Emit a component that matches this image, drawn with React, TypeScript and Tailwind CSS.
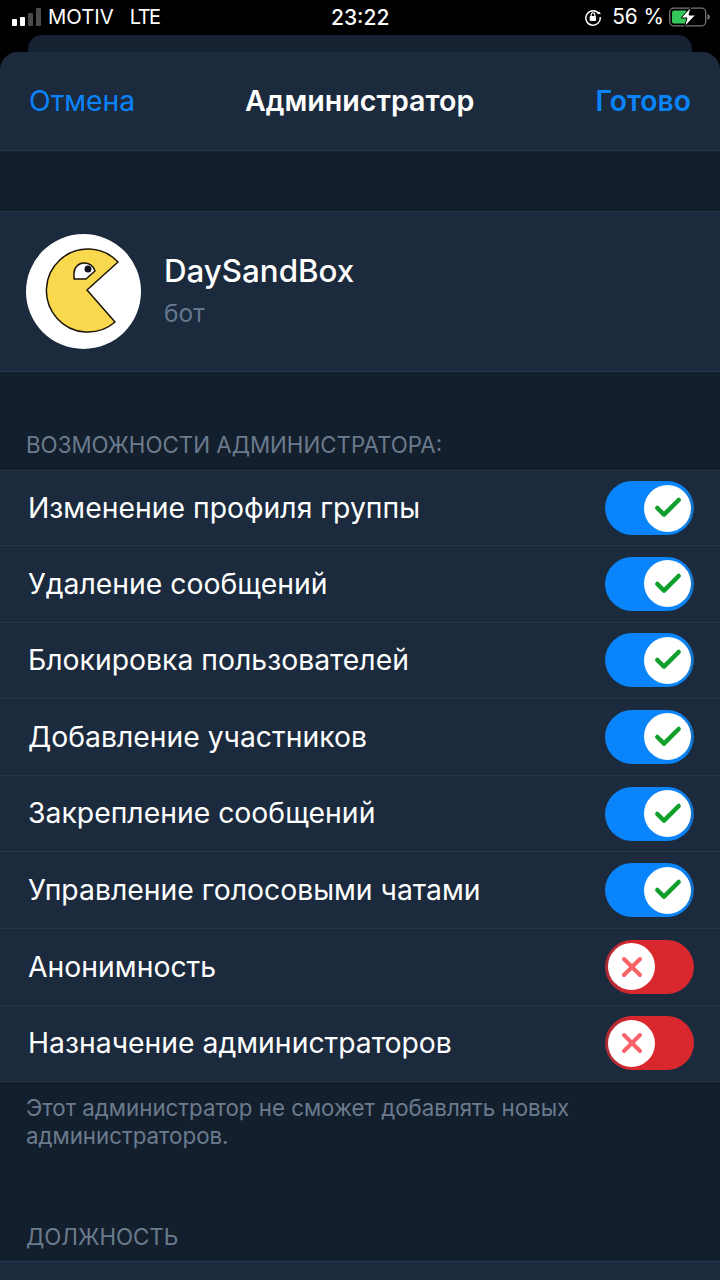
import { Check, X } from 'lucide-react';

const permissions = [
  { label: 'Изменение профиля группы', on: true },
  { label: 'Удаление сообщений', on: true },
  { label: 'Блокировка пользователей', on: true },
  { label: 'Добавление участников', on: true },
  { label: 'Закрепление сообщений', on: true },
  { label: 'Управление голосовыми чатами', on: true },
  { label: 'Анонимность', on: false },
  { label: 'Назначение администраторов', on: false },
];

function StatusBar() {
  return (
    <div className="h-[35px] bg-black text-white flex items-center justify-between pl-[12px] pr-[10px] relative text-[21px] leading-none">
      <div className="flex items-center">
        <div className="flex items-end gap-[3px] h-[18px]">
          <span className="w-[5px] h-[7px] rounded-[1px] bg-white" />
          <span className="w-[5px] h-[9px] rounded-[1px] bg-white" />
          <span className="w-[5px] h-[13px] rounded-[1px] bg-[#4a4a4a]" />
          <span className="w-[5px] h-[18px] rounded-[1px] bg-[#4a4a4a]" />
        </div>
        <span className="ml-[7px] text-[20.3px]">MOTIV</span>
        <span className="ml-[16px] text-[20px] tracking-[-1.5px]">LTE</span>
      </div>
      <span className="absolute left-[331px] top-[7px] text-[21px] font-medium">23:22</span>
      <div className="flex items-center">
        <svg width="18" height="18" viewBox="0 0 20 20" fill="none">
          <path d="M16.6 6.500A8 8 0 1 0 18 10" stroke="white" strokeWidth="1.6" />
          <path d="M14.800 6.800h4l-2-2.800z" fill="white" />
          <rect x="6.300" y="9" width="7" height="5.400" rx="0.800" fill="white" />
          <path d="M7.900 9V7.600a2.100 2.100 0 0 1 4.200 0V9" stroke="white" strokeWidth="1.300" />
        </svg>
        <span className="ml-[10px] text-[20.800px]">56 %</span>
        <svg className="ml-[5px]" width="41" height="20" viewBox="0 0 41 20" fill="none">
          <rect x="0.700" y="1.200" width="36" height="17.600" rx="4" stroke="#777" strokeWidth="1.300" />
          <rect x="3" y="3.400" width="15" height="13.200" rx="2" fill="#34c759" />
          <path d="M38.500 7q2.500 .8 2.500 3t-2.500 3z" fill="#777" />
          <path d="M22 0 12 11h6l-2.500 9 11-12h-6.500z" fill="white" stroke="black" strokeWidth="1" />
        </svg>
      </div>
    </div>
  );
}

function PacmanAvatar() {
  return (
    <div className="w-[115px] h-[115px] rounded-full bg-white flex items-center justify-center shrink-0">
      <svg width="115" height="115" viewBox="0 0 115 115">
        <path
          d="M92 28 L61 56 L89 88 A41.500 41.500 0 1 1 92 28 Z"
          fill="#fad84d"
          stroke="#1a1408"
          strokeWidth="1.500"
          strokeLinejoin="round"
        />
        <path
          d="M48 45 V39 A10 10 0 0 1 58 29 A11 10 0 0 1 69 37 L60 45 Z"
          fill="white"
          stroke="#1a1408"
          strokeWidth="1.500"
          strokeLinejoin="round"
        />
        <circle cx="62" cy="35" r="3.500" fill="#10131c" />
      </svg>
    </div>
  );
}

function Toggle({ on }: { on: boolean }) {
  if (on) {
    return (
      <div className="w-[89px] h-[54px] rounded-full bg-[linear-gradient(90deg,#0a84fb_88%,#166fba)] flex items-center justify-end pr-[3px]">
        <div className="w-[47px] h-[47px] rounded-full bg-white flex items-center justify-center">
          <Check size={32} strokeWidth={3.400} className="text-[#12a02c]" />
        </div>
      </div>
    );
  }
  return (
    <div className="w-[89px] h-[54px] rounded-full bg-[linear-gradient(90deg,#a92b36,#d9272e_30%)] flex items-center justify-start pl-[3px]">
      <div className="w-[47px] h-[47px] rounded-full bg-white flex items-center justify-center">
        <X size={32} strokeWidth={3} className="text-[#f8636a]" />
      </div>
    </div>
  );
}

export default function App() {
  return (
    <div
      className="w-[720px] h-[1280px] overflow-hidden bg-black"
      style={{ fontFamily: 'Inter, "Noto Sans", sans-serif' }}
    >
      <StatusBar />
      <div className="mx-[28px] h-[17px] rounded-t-[14px] bg-[#172332]" />
      <div className="h-[1228px] rounded-t-[18px] bg-[#141f2d] overflow-hidden">
        <header className="h-[99px] bg-[#1b2a3d] border-b border-[#26384b] flex items-center justify-between pl-[29px] pr-[29px] relative text-[28.300px]">
          <span className="text-[#0a84fb]">Отмена</span>
          <span className="text-white font-semibold text-[28.600px] absolute left-[245px]">Администратор</span>
          <span className="text-[#0a84fb] font-semibold">Готово</span>
        </header>

        <section className="mt-[60px] h-[161px] bg-[#1b2a3d] border-y border-[#26384b] flex items-center pl-[26px]">
          <PacmanAvatar />
          <div className="ml-[23px] flex flex-col">
            <span className="text-white text-[31.300px] leading-[40px] font-medium -mt-[4px]">DaySandBox</span>
            <span className="text-[#65788e] text-[24.500px] leading-[32px] mt-[6px]">бот</span>
          </div>
        </section>

        <p className="mt-[60px] pl-[26px] text-[22.300px] leading-[26px] text-[#6b7b8e]">ВОЗМОЖНОСТИ АДМИНИСТРАТОРА:</p>

        <ul className="mt-[12px] bg-[#1b2a3d] border-y border-[#26384b]">
          {permissions.map((item, i) => (
            <li
              key={item.label}
              className={`flex items-center justify-between pl-[28px] pr-[26px] ${i > 0 ? 'h-[76.600px] border-t border-[#26384b]' : 'h-[74px]'}`}
            >
              <span className="text-white text-[28.350px]">{item.label}</span>
              <Toggle on={item.on} />
            </li>
          ))}
        </ul>

        <p className="mt-[12px] pl-[26px] pr-[100px] text-[22.300px] leading-[28px] text-[#6b7b8e]">
          Этот администратор не сможет добавлять новых администраторов.
        </p>

        <p className="mt-[74px] pl-[26px] text-[22.300px] leading-[26px] text-[#6b7b8e]">ДОЛЖНОСТЬ</p>
        <div className="mt-[11px] h-[30px] bg-[#1b2a3d] border-t border-[#26384b]" />
      </div>
    </div>
  );
}
